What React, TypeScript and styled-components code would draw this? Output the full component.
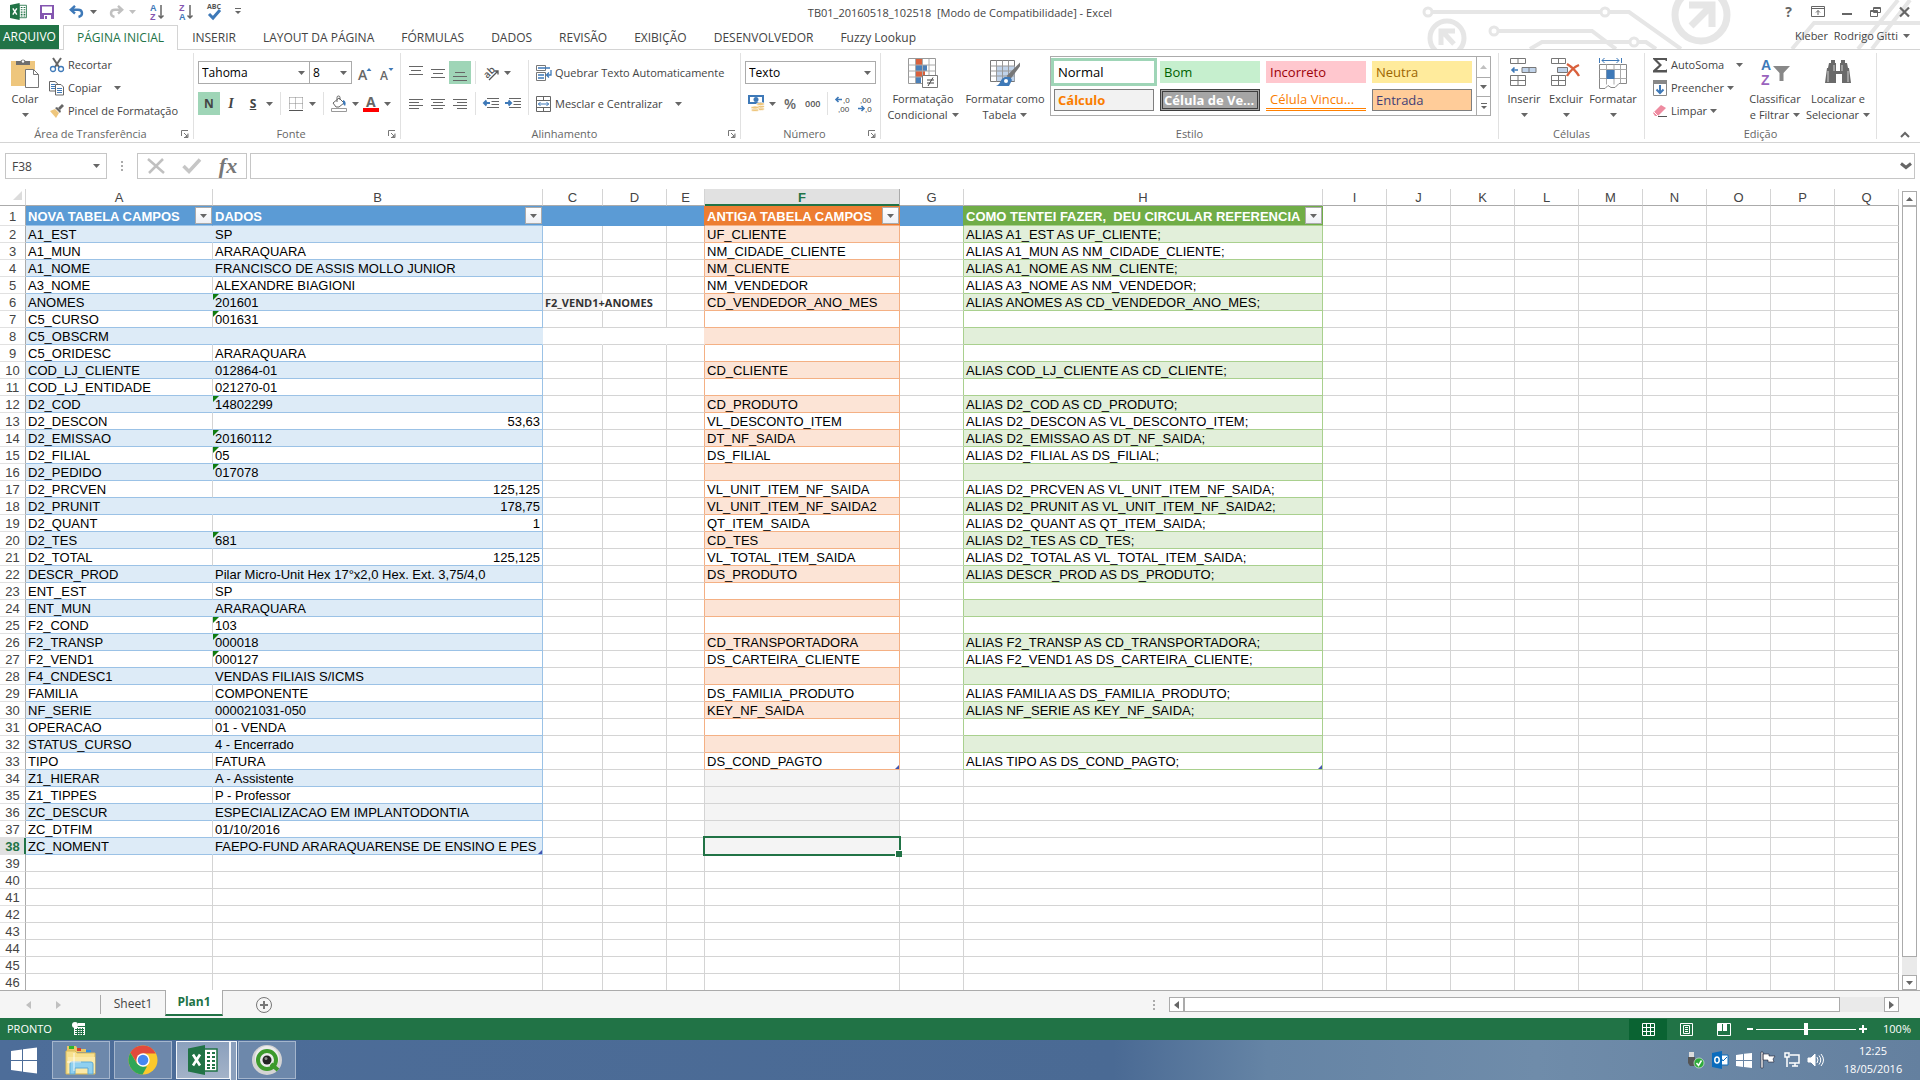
import React from 'react';
import styled, { createGlobalStyle, css } from 'styled-components';

const UI = `"Open Sans", "Noto Sans", sans-serif`;
const CELL = `"Liberation Sans", Arial, sans-serif`;
const GREEN = '#217346';
const LINE = '#d4d4d4';
const FRAME = '#ababab';

const Global = createGlobalStyle`
  * { box-sizing: border-box; }
  body { margin: 0; background: #fff; overflow: hidden; }
  button, input, select { font: inherit; color: inherit; margin: 0; }
  button { background: none; border: 0; padding: 0; }
  svg { display: block; flex: none; overflow: visible; }
`;

const Page = styled.div`
  display: flex;
  flex-direction: column;
  height: 100vh;
  font: 11px/16px ${UI};
  color: #444;
`;

/* ---------- title bar ---------- */
const Top = styled.header`
  position: relative;
  height: 50px;
  border-bottom: 1px solid ${LINE};
`;
const Circuit = styled.svg`
  position: absolute;
  top: 0;
  right: 0;
  overflow: hidden;
`;
const TitleBar = styled.div`
  position: relative;
  display: grid;
  grid-template-columns: 1fr auto 1fr;
  align-items: center;
  height: 25px;
`;
const Title = styled.h1`
  margin: 0;
  font: 11px/16px ${UI};
  white-space: pre;
`;
const QuickBar = styled.div`
  display: flex;
  align-items: center;
  padding: 0 0 2px 10px;
`;
const QuickButton = styled.button<{ $w: number }>`
  width: ${p => p.$w}px;
  height: 20px;
  display: flex;
  align-items: center;
`;
const WindowButtons = styled.div`
  display: flex;
  justify-content: flex-end;
  padding: 0 1px 2px 0;
`;
const WindowButton = styled.button`
  width: 29px;
  height: 20px;
  display: grid;
  place-items: center;
  font-weight: 700;
  font-size: 14px;
  color: #666;
`;
const TabRow = styled.div`
  position: relative;
  display: flex;
  height: 25px;
`;
const FileTab = styled.button`
  width: 59px;
  height: 24px;
  margin-right: 4px;
  background: ${GREEN};
  color: #fff;
  font-size: 12px;
`;
const Tab = styled.button<{ $active?: boolean }>`
  height: 25px;
  padding: 0 12px;
  margin-right: 1px;
  border: 1px solid transparent;
  border-bottom: 0;
  font-size: 12px;
  white-space: nowrap;
  ${p => p.$active && css`
    padding: 0 13px;
    color: ${GREEN};
    background: #fff;
    border-color: ${LINE};
  `}
`;
const Account = styled.button`
  display: flex;
  align-items: center;
  gap: 5px;
  margin: 0 10px 4px auto;
  white-space: pre;
`;

/* ---------- ribbon ---------- */
const Ribbon = styled.div`
  display: flex;
  height: 93px;
  border-bottom: 1px solid ${LINE};
`;
const GroupBox = styled.section<{ $w: number }>`
  display: flex;
  flex-direction: column;
  width: ${p => p.$w}px;
  flex: none;
  border-right: 1px solid transparent;
  border-image: linear-gradient(#fff 4px, #e1e1e1 4px, #e1e1e1 88px, #fff 88px) 1;
  border-width: 0 1px 0 0;
`;
const GroupBody = styled.div<{ $left?: number }>`
  display: flex;
  flex: 1;
  padding-left: ${p => p.$left ?? 4}px;
`;
const GroupFoot = styled.div`
  display: flex;
  align-items: center;
  height: 16px;
  color: #666;
`;
const GroupName = styled.span`
  flex: 1;
  text-align: center;
`;
const Launcher = styled.button`
  width: 12px;
  height: 12px;
`;
const Big = styled.button<{ $w: number }>`
  display: flex;
  flex-direction: column;
  align-items: center;
  width: ${p => p.$w}px;
  height: 73px;
  padding-top: 8px;
  white-space: nowrap;
`;
const BigIcon = styled.span`
  height: 33px;
`;
const BigLine = styled.span`
  display: flex;
  align-items: center;
  justify-content: center;
  gap: 4px;
  height: 16px;
`;
const SmallColumn = styled.div<{ $w?: number }>`
  display: flex;
  flex-direction: column;
  align-items: flex-start;
  padding: 3px 0 0 3px;
  ${p => p.$w && css`width: ${p.$w}px;`}
`;
const Small = styled.button`
  display: flex;
  align-items: center;
  gap: 3px;
  height: 23px;
  white-space: nowrap;
`;
const CaretPad = styled.span`
  padding-left: 9px;
`;
const Rows = styled.div<{ $left?: number }>`
  display: flex;
  flex-direction: column;
  gap: 8px;
  padding: 11px 0 0 ${p => p.$left ?? 0}px;
`;
const Row = styled.div`
  display: flex;
  align-items: center;
  height: 23px;
`;
const Tool = styled.button<{ $on?: boolean; $narrow?: boolean }>`
  width: ${p => (p.$narrow ? 10 : 22)}px;
  height: 23px;
  display: grid;
  place-items: center;
  ${p => p.$on && css`background: #9fd5b7;`}
`;
const Letter = styled.span<{ $kind: 'b' | 'i' | 'u' }>`
  font-size: 12px;
  font-weight: 700;
  ${p => p.$kind === 'i' && css`font-family: "Liberation Serif", serif; font-style: italic; font-size: 14px;`}
  ${p => p.$kind === 'u' && css`text-decoration: underline;`}
`;
const Percent = styled.span`
  font-size: 14px;
  font-weight: 600;
  color: #666;
`;
const Rule = styled.span`
  width: 1px;
  height: 23px;
  margin: 0 4px;
  background: #e1e1e1;
`;
const TallRule = styled.span`
  width: 1px;
  height: 55px;
  margin: 10px 0 0 4px;
  background: #e1e1e1;
`;
const Gap = styled.span`
  width: 2px;
`;
const Combo = styled.span<{ $w: number }>`
  position: relative;
  width: ${p => p.$w}px;
  height: 23px;
  border: 1px solid ${FRAME};
  color: #000;
  font-size: 12px;
  & + & { border-left: 0; }
  select {
    appearance: none;
    width: 100%;
    height: 21px;
    padding: 0 3px;
    border: 0;
    background: transparent;
  }
  svg { position: absolute; right: 4px; top: 9px; }
`;
const Gallery = styled.div`
  display: flex;
  width: 441px;
  height: 60px;
  margin: 6px 0 0 3px;
  border: 1px solid ${FRAME};
`;
const Styles = styled.div`
  display: grid;
  grid-template-columns: repeat(4, 100px);
  grid-auto-rows: 22px;
  gap: 6px;
  padding: 4px 4px 0 3px;
`;
const StyleButton = styled.button<{ $bg: string; $fg: string; $line?: string; $bold?: boolean; $variant?: string }>`
  padding: 0 4px;
  font-size: 13px;
  text-align: left;
  background: ${p => p.$bg};
  color: ${p => p.$fg};
  font-weight: ${p => (p.$bold ? 700 : 400)};
  white-space: nowrap;
  ${p => p.$line && css`border: 1px solid ${p.$line}; padding: 0 3px;`}
  ${p => p.$variant === 'picked' && css`outline: 3px solid #9fd5b7;`}
  ${p => p.$variant === 'double' && css`border: 3px double #3f3f3f; padding: 0 1px;`}
  ${p => p.$variant === 'under' && css`border-bottom: 3px double #ff8001;`}
`;
const GalleryArrows = styled.div`
  display: grid;
  grid-template-rows: 20px 19px 19px;
  width: 14px;
  border-left: 1px solid ${FRAME};
  button { display: grid; place-items: center; }
  button + button { border-top: 1px solid ${FRAME}; }
`;
const Collapse = styled.button`
  margin: auto 10px 4px auto;
`;

/* ---------- formula bar ---------- */
const FormulaBar = styled.div`
  display: flex;
  align-items: center;
  height: 46px;
  padding: 0 5px;
  font-size: 12px;
`;
const NameBox = styled.span`
  position: relative;
  width: 102px;
  height: 26px;
  border: 1px solid #c6c6c6;
  input { width: 100%; height: 24px; border: 0; padding: 0 6px; background: transparent; }
  svg { position: absolute; right: 6px; top: 10px; }
`;
const Dots = styled.span`
  display: grid;
  gap: 2px;
  width: 30px;
  justify-items: center;
  i { width: 2px; height: 2px; background: ${FRAME}; }
`;
const EditButtons = styled.span`
  display: grid;
  grid-template-columns: repeat(3, 1fr);
  width: 110px;
  height: 26px;
  margin-right: 3px;
  border: 1px solid #c6c6c6;
  button { display: grid; place-items: center; }
`;
const Fx = styled.span`
  font: italic 700 22px/22px "Liberation Serif", serif;
  color: #777;
`;
const FormulaBox = styled.span`
  display: flex;
  flex: 1;
  align-items: center;
  height: 26px;
  border: 1px solid #c6c6c6;
  padding-right: 2px;
  input { flex: 1; height: 24px; border: 0; padding: 0 6px; }
`;

/* ---------- sheet ---------- */
const SheetArea = styled.main`
  display: flex;
  flex: 1;
  min-height: 0;
  overflow: hidden;
`;
const GridHolder = styled.div`
  flex: 1;
  min-width: 0;
  overflow: hidden;
`;
const Table = styled.table`
  width: 100%;
  table-layout: fixed;
  border-collapse: separate;
  border-spacing: 0;
  font: 13px/14px ${CELL};
  color: #000;
`;
const Col = styled.col<{ $w: number }>`
  width: ${p => p.$w}px;
`;
const Corner = styled.td`
  height: 17px;
  padding: 0 3px 3px 0;
  border-right: 1px solid ${LINE};
  border-bottom: 1px solid ${FRAME};
  svg { margin-left: auto; }
`;
const ColHead = styled.th<{ $on?: boolean }>`
  height: 17px;
  padding: 2px 0 0;
  font-weight: 400;
  color: #444;
  border-right: 1px solid ${LINE};
  border-bottom: 1px solid ${FRAME};
  ${p => p.$on && css`
    background: #e1e1e1;
    color: ${GREEN};
    font-weight: 700;
    border-color: ${FRAME};
    border-bottom-color: ${GREEN};
    box-shadow: inset 0 -1px ${GREEN};
  `}
`;
const RowHead = styled.th<{ $on?: boolean }>`
  padding: 2px 0 0;
  font-weight: 400;
  color: #444;
  border-right: 1px solid ${FRAME};
  border-bottom: 1px solid #e1e1e1;
  ${p => p.$on && css`
    background: #e1e1e1;
    color: ${GREEN};
    font-weight: 700;
    border-right-color: ${GREEN};
    box-shadow: inset -1px 0 ${GREEN};
  `}
`;
const Cell = styled.td<{ $bg?: string; $right: string; $bottom: string; $num?: boolean; $flag?: boolean; $corner?: boolean; $spill?: boolean }>`
  position: relative;
  height: 17px;
  padding: 2px 2px 0;
  white-space: pre;
  overflow: ${p => (p.$spill ? 'visible' : 'hidden')};
  background: ${p => p.$bg ?? 'transparent'};
  border-right: 1px solid ${p => p.$right};
  border-bottom: 1px solid ${p => p.$bottom};
  text-align: ${p => (p.$num ? 'right' : 'left')};
  ${p => p.$flag && css`
    &::before {
      content: '';
      position: absolute;
      left: 0;
      top: 0;
      border: 3px solid transparent;
      border-top-color: #107c10;
      border-left-color: #107c10;
    }
  `}
  ${p => p.$corner && css`
    &::after {
      content: '';
      position: absolute;
      right: 0;
      bottom: 0;
      border: 2px solid #4455b0;
      border-top-color: transparent;
      border-left-color: transparent;
    }
  `}
`;
const HeadCell = styled.td<{ $bg: string; $right: string; $bottom: string }>`
  height: 20px;
  padding: 0 0 0 2px;
  background: ${p => p.$bg};
  border-right: 1px solid ${p => p.$right};
  border-bottom: 1px solid ${p => p.$bottom};
  color: #fff;
  font-weight: 700;
  white-space: pre;
`;
const HeadFlex = styled.div`
  display: flex;
  align-items: center;
  justify-content: space-between;
  height: 19px;
`;
const HeadText = styled.span`
  padding-top: 2px;
`;
const Filter = styled.button`
  width: 17px;
  height: 17px;
  display: grid;
  place-items: center;
  border: 1px solid ${FRAME};
  background: linear-gradient(#fff, #eef0f5);
`;
const Note = styled.span`
  position: relative;
  z-index: 1;
  font: 700 11px/14px ${UI};
  color: #333;
`;
const Selection = styled.div`
  position: absolute;
  z-index: 1;
  inset: -2px;
  border: 2px solid ${GREEN};
  &::after {
    content: '';
    position: absolute;
    right: -3px;
    bottom: -3px;
    width: 6px;
    height: 6px;
    background: ${GREEN};
    border: solid #fff;
    border-width: 1px 0 0 1px;
  }
`;
const VScroll = styled.div`
  display: flex;
  flex-direction: column;
  width: 15px;
  margin: 2px 3px 0;
  background: #eaeaea;
`;
const ScrollButton = styled.button`
  flex: none;
  width: 15px;
  height: 15px;
  display: grid;
  place-items: center;
  background: #fff;
  border: 1px solid ${FRAME};
`;
const VThumb = styled.div`
  flex: 1;
  margin-bottom: 18px;
  background: #fff;
  border: 1px solid ${FRAME};
`;

/* ---------- sheet tabs ---------- */
const TabStrip = styled.div`
  display: flex;
  align-items: center;
  height: 28px;
  padding-right: 21px;
  background: #f5f5f5;
  border-top: 1px solid ${FRAME};
`;
const Nav = styled.div`
  display: flex;
  align-items: center;
  gap: 25px;
  width: 101px;
  height: 19px;
  padding-left: 26px;
  border-right: 1px solid ${FRAME};
`;
const SheetTab = styled.button<{ $active?: boolean }>`
  align-self: flex-start;
  width: ${p => (p.$active ? 58 : 64)}px;
  height: 25px;
  font-size: 12px;
  ${p => p.$active && css`
    height: 26px;
    margin-top: -1px;
    color: ${GREEN};
    font-weight: 700;
    background: #fff;
    border: solid ${FRAME};
    border-width: 0 1px 2px;
    border-bottom-color: ${GREEN};
  `}
`;
const AddSheet = styled.button`
  margin-left: 33px;
`;
const HScroll = styled.div`
  display: flex;
  width: 730px;
  height: 15px;
  background: #eaeaea;
`;
const HThumb = styled.div`
  flex: 1;
  margin-right: 44px;
  background: #fff;
  border: 1px solid ${FRAME};
`;
const Push = styled.span`
  margin-left: auto;
`;

/* ---------- status bar ---------- */
const Status = styled.footer`
  display: flex;
  align-items: center;
  height: 22px;
  padding: 0 9px 0 7px;
  background: ${GREEN};
  color: #fff;
`;
const Macro = styled.button`
  margin-left: 20px;
`;
const View = styled.button<{ $on?: boolean }>`
  width: 38px;
  height: 21px;
  display: grid;
  place-items: center;
  ${p => p.$on && css`background: #0a6332;`}
`;
const ZoomSign = styled.button`
  width: 13px;
  height: 20px;
  display: grid;
  place-items: center;
`;
const Slider = styled.input`
  appearance: none;
  width: 100px;
  height: 12px;
  background: linear-gradient(#fff, #fff) center / 100% 1px no-repeat;
  &::-webkit-slider-thumb {
    appearance: none;
    width: 4px;
    height: 12px;
    background: #fff;
  }
`;
const ZoomValue = styled.span`
  width: 42px;
  text-align: right;
`;

/* ---------- task bar ---------- */
const TaskBar = styled.nav`
  display: flex;
  align-items: center;
  height: 40px;
  padding-right: 6px;
  background: linear-gradient(90deg, #4d6d99 0, #4a6a94 58%, #6584a5 66%, #6f8caa 80%, #64809f 100%);
  color: #fff;
`;
const Start = styled.button`
  width: 48px;
  height: 40px;
  display: grid;
  place-items: center;
`;
const Task = styled.button<{ $on?: boolean }>`
  position: relative;
  width: 58px;
  height: 38px;
  margin-left: 4px;
  display: grid;
  place-items: center;
  background: #6d88ab;
  border: 1px solid #a4b5cc;
  ${p => p.$on && css`
    width: 54px;
    margin-right: 4px;
    background: linear-gradient(#8ba0bd, #a3b2c8);
    border-color: #f2f5f9;
    &::after {
      content: '';
      position: absolute;
      left: 53px;
      top: -1px;
      width: 5px;
      height: 38px;
      background: #8ba0bd;
      border: 1px solid #f2f5f9;
    }
  `}
`;
const Tray = styled.div`
  display: flex;
  gap: 8px;
  margin-left: auto;
`;
const Clock = styled.time`
  width: 90px;
  padding-left: 8px;
  line-height: 18px;
  text-align: center;
`;

/* ---------- icons ---------- */
const Caret = ({ c = '#666', up = false }: { c?: string; up?: boolean }) => (
  <svg width="7" height="4" viewBox="0 0 7 4"><path d={up ? 'M3.500 0 7 4H0z' : 'M0 0h7L3.500 4z'} fill={c} /></svg>
);
const Side = ({ dir, c = '#666' }: { dir: 'l' | 'r'; c?: string }) => (
  <svg width="5" height="8" viewBox="0 0 5 8"><path d={dir === 'l' ? 'M5 0v8L0 4z' : 'M0 0v8l5-4z'} fill={c} /></svg>
);
const LaunchIcon = () => (
  <svg width="8" height="8" viewBox="0 0 8 8" fill="none" stroke="#777"><path d="M.5 6V.5H7M3 3l3 3M7 3.500V7.500H3" /><path d="M6.500 4v3H4z" fill="#777" stroke="none" /></svg>
);
const ExcelIcon = ({ s }: { s: number }) => (
  <svg width={s} height={s} viewBox="0 0 30 30">
    <path d="M16 4h13v22H16z" fill="#fff" stroke={GREEN} strokeWidth="1.500" />
    <path d="M19 8h3M24 8h3M19 12h3M24 12h3M19 16h3M24 16h3M19 20h3M24 20h3M19 23h3M24 23h3" stroke={GREEN} strokeWidth="2" />
    <path d="M0 3.500 17 0v30L0 26.500z" fill={GREEN} />
    <path d="m5 9.500 7 11M12 9.500l-7 11" stroke="#fff" strokeWidth="2.600" />
  </svg>
);
const SaveIcon = () => (
  <svg width="14" height="14" viewBox="0 0 14 14"><path d="M0 0h14v14H0z" fill="#8456b0" /><path d="M2 1.500h10V8H2zM4 10h7v4H4z" fill="#fff" /><path d="M5 11h2v3H5z" fill="#8456b0" /></svg>
);
const UndoIcon = ({ c, flip }: { c: string; flip?: boolean }) => (
  <svg width="15" height="13" viewBox="0 0 15 13" fill="none" stroke={c} strokeWidth="2.400">
    <g transform={flip ? 'matrix(-1 0 0 1 15 0)' : undefined}><path d="M6 .8 1.800 4.800 6 8.500M2 4.800h7c5 0 5.500 6 .5 7.200" /></g>
  </svg>
);
const SortIcon = ({ a, b, ca, cb }: { a: string; b: string; ca: string; cb: string }) => (
  <svg width="15" height="17" viewBox="0 0 15 17">
    <text x="0" y="8" fontFamily="Liberation Sans" fontWeight="700" fontSize="9" fill={ca}>{a}</text>
    <text x="0" y="17" fontFamily="Liberation Sans" fontWeight="700" fontSize="9" fill={cb}>{b}</text>
    <path d="M11 2v13M8.500 12.500 11 15l2.500-2.500" fill="none" stroke="#666" strokeWidth="1.500" />
  </svg>
);
const SpellIcon = () => (
  <svg width="15" height="17" viewBox="0 0 15 17">
    <text x="0" y="6" fontFamily="Open Sans" fontWeight="700" fontSize="7" fill="#555">ABC</text>
    <path d="m2 11 4 4 7-8" fill="none" stroke="#3e79b8" strokeWidth="3" />
  </svg>
);
const CustomIcon = () => (
  <svg width="6" height="7" viewBox="0 0 6 7"><path d="M0 .5h6" stroke="#666" /><path d="M0 3h6L3 6z" fill="#666" /></svg>
);
const PasteIcon = () => (
  <svg width="30" height="30" viewBox="0 0 30 30">
    <path d="M1 3h24v25H1z" fill="#eec67d" />
    <path d="M6 7V3h4.500a2.800 2.800 0 0 1 5 0H20v4z" fill="#6e6e6e" /><circle cx="13" cy="3.500" r="1.200" fill="#fff" />
    <path d="M15.500 11.500h8l5 5v13h-13z" fill="#fff" stroke="#777" /><path d="M23.500 11.500v5h5" fill="none" stroke="#777" />
  </svg>
);
const CutIcon = () => (
  <svg width="16" height="16" viewBox="0 0 16 16" fill="none">
    <path d="m4 1 6 9M12 1l-6 9" stroke="#666" strokeWidth="2" /><circle cx="4" cy="12" r="2.500" stroke="#3e79b8" strokeWidth="1.300" /><circle cx="12" cy="12" r="2.500" stroke="#3e79b8" strokeWidth="1.300" />
  </svg>
);
const CopyIcon = () => (
  <svg width="16" height="16" viewBox="0 0 16 16" fill="#fff" stroke="#666">
    <path d="M.5 1.500H6l2.500 2v7.500h-8z" /><path d="M2 4.500h4M2 6.500h4M2 8.500h4" stroke="#3e79b8" />
    <path d="M6.500 4.500H12l2.500 2.500v8h-8z" /><path d="M8 8.500h5M8 10.500h5M8 12.500h5" stroke="#3e79b8" />
  </svg>
);
const BrushIcon = () => (
  <svg width="16" height="16" viewBox="0 0 16 16">
    <path d="m1 8 5-2 4 4-3 5z" fill="#eec67d" /><path d="m6 5 2-1 4 4-1 2z" fill="#666" /><path d="m9 5 4-4 2 2-4 4z" fill="#666" />
  </svg>
);
const FontSizeIcon = ({ up }: { up?: boolean }) => (
  <svg width="16" height="16" viewBox="0 0 16 16">
    <text x="1" y="15" fontFamily="Open Sans" fontWeight="600" fontSize={up ? 14 : 12} fill="#666">A</text>
    <path d={up ? 'M12 3 14.500 6h-5z' : 'M9.500 3h5L12 6z'} fill="#3e79b8" />
  </svg>
);
const BordersIcon = () => (
  <svg width="14" height="14" viewBox="0 0 14 14" fill="none" stroke="#888" strokeDasharray="1 1"><path d="M.5.5h13M.5 6.500h13M.5.5v12M6.500.5v12M13.500.5v12" /><path d="M0 13.500h14" stroke="#555" strokeDasharray="none" /></svg>
);
const FillIcon = () => (
  <svg width="17" height="16" viewBox="0 0 17 16">
    <path d="m2 7 6-5 5 5-5 4H5z" fill="#fff" stroke="#666" /><path d="M6 6V1.500a1.500 1.500 0 0 1 3 0V4" fill="none" stroke="#666" /><path d="M12 4c3 1 3 4 2 6l-2-2z" fill="#3e79b8" />
    <path d="M.5 12.500h15v3H.5z" fill="#fff" stroke="#999" />
  </svg>
);
const FontColorIcon = () => (
  <svg width="16" height="16" viewBox="0 0 16 16">
    <text x="3" y="11" fontFamily="Open Sans" fontWeight="700" fontSize="14" fill="#666">A</text><path d="M0 12h16v4H0z" fill="#f00" />
  </svg>
);
const LinesIcon = ({ rows }: { rows: Array<[number, number, number]> }) => (
  <svg width="14" height="16" viewBox="0 0 14 16" stroke="#666">{rows.map(([y, a, b]) => <path key={y} d={`M${a} ${y}.5H${b}`} />)}</svg>
);
const OrientIcon = () => (
  <svg width="17" height="16" viewBox="0 0 17 16">
    <text x="1" y="12" transform="rotate(-45 5 9)" fontFamily="Open Sans" fontWeight="600" fontSize="10" fill="#555">ab</text>
    <path d="m6 15 9-9M11.500 6H15v3.500" fill="none" stroke="#555" strokeWidth="1.300" />
  </svg>
);
const IndentIcon = ({ right }: { right?: boolean }) => (
  <svg width="16" height="12" viewBox="0 0 16 12" fill="none">
    <path d="M4 .5h12M8.500 3.500H16M8.500 6.500H16M4 9.500h12" stroke="#666" />
    <path d={right ? 'M0 5h6M3.500 2.500 6 5 3.500 7.500' : 'M7 5H1M3.500 2.500 1 5l2.500 2.500'} stroke="#3e79b8" strokeWidth="2" />
  </svg>
);
const WrapIcon = () => (
  <svg width="16" height="16" viewBox="0 0 16 16" fill="none">
    <path d="M.5.5h9v5h-9z" stroke="#777" /><path d="M2 3h12" stroke="#3e79b8" strokeWidth="1.500" />
    <path d="M.5 7.500h9v8h-9z" stroke="#777" /><path d="M2 10h6M2 13h6M15 5v5h-4M13 7.500 10.500 10l2.500 2.500" stroke="#3e79b8" strokeWidth="1.300" />
  </svg>
);
const MergeIcon = () => (
  <svg width="16" height="16" viewBox="0 0 16 16" fill="none">
    <path d="M.5.5h14v15H.5zM.5 4.500h14M.5 11.500h14M7.500.5v4M7.500 11.500v4" stroke="#666" /><path d="M2 8h11M4.500 6 2.500 8l2 2M10.500 6l2 2-2 2" stroke="#3e79b8" />
  </svg>
);
const MoneyIcon = () => (
  <svg width="17" height="17" viewBox="0 0 17 17">
    <path d="M0 0h16v9H0z" fill="#3e79b8" /><path d="M2 2h12v5H2z" fill="#fff" /><circle cx="8" cy="4.500" r="2.500" fill="#3e79b8" />
    <g fill="#eec67d" stroke="#fff" strokeWidth=".7"><ellipse cx="12.500" cy="14" rx="4" ry="1.600" /><ellipse cx="12.500" cy="11.500" rx="4" ry="1.600" /><ellipse cx="12.500" cy="9" rx="4" ry="1.600" /><ellipse cx="7" cy="15" rx="4" ry="1.600" /><ellipse cx="7" cy="12.500" rx="4" ry="1.600" /></g>
  </svg>
);
const DecimalIcon = ({ more }: { more?: boolean }) => (
  <svg width="16" height="16" viewBox="0 0 16 16">
    <g fontFamily="Liberation Sans" fontSize="8" fill="#444">
      <text x={more ? 8 : 3} y="7">{more ? ',0' : ',00'}</text><text x={more ? 3 : 8} y="16">{more ? ',00' : ',0'}</text>
    </g>
    <path d={more ? 'M7 3.500H1M3.500 1 1 3.500 3.500 6' : 'M1 12.500h6M4.500 10 7 12.500 4.500 15'} fill="none" stroke="#3e79b8" strokeWidth="1.600" />
  </svg>
);
const CondIcon = () => (
  <svg width="30" height="30" viewBox="0 0 30 30" fill="none">
    <path d="M.5.5h27v25H.5z" fill="#fff" stroke="#999" />
    <path d="M8 1h6v6H8zM8 13h9v6H8z" fill="#d9603c" /><path d="M8 7h11v6H8zM8 19h5v6H8z" fill="#4a7fb8" />
    <path d="M.5 7h27M.5 13h27M.5 19h27M7.500 1v25M14.500 1v25M21 1v25" stroke="#aaa" />
    <path d="M14.500 17.500h15v12h-15z" fill="#fff" stroke="#777" /><path d="M19 22h7M19 25h7M25 19.500 20 28" stroke="#444" />
  </svg>
);
const TableIcon = () => (
  <svg width="30" height="30" viewBox="0 0 30 30" fill="none">
    <path d="M.5 2.500h24v21H.5z" fill="#fff" stroke="#777" /><path d="M6.500 8h18v15h-18z" fill="#c0d3ea" />
    <path d="M.5 8h24M.5 13h24M.5 18h24M6.500 2.500v21M12.500 2.500v21M18.500 2.500v21" stroke="#999" />
    <path d="m29 8-9 12-2-2L29 7z" fill="#777" stroke="#777" strokeWidth="2" /><path d="m20 19 2 3-3 6H6c5-1 4-8 9-9z" fill="#3e79b8" /><circle cx="16" cy="23" r="2" fill="#fff" />
  </svg>
);
const InsertIcon = () => (
  <svg width="28" height="30" viewBox="0 0 28 30" fill="#fff" stroke="#777">
    <path d="M.5.500h15v5H.5zM8 .5v5M.5 17.500h15v10H.5zM8 17.500v10M.5 22.500h15" /><path d="M12 9.500h14v5H12z" fill="#c0d3ea" /><path d="M19 9.500v5" />
    <path d="M8 12H2M4.500 9.500 2 12l2.500 2.500" fill="none" stroke="#3e79b8" strokeWidth="1.600" />
  </svg>
);
const DeleteIcon = () => (
  <svg width="30" height="30" viewBox="0 0 30 30" fill="#fff" stroke="#777">
    <path d="M.5.500h14v5H.5zM7.500.5v5M.5 17.500h14v10H.5zM7.500 17.500v10M.5 22.500h14" /><path d="M6.500 9.500h10v5h-10z" fill="#c0d3ea" />
    <path d="M16 6c5 3 9 7 12 12M28 7c-5 2-9 6-12 11" fill="none" stroke="#d9603c" strokeWidth="2.400" />
  </svg>
);
const FormatIcon = () => (
  <svg width="28" height="31" viewBox="0 0 28 31" fill="#fff" stroke="#888">
    <path d="M.5 6.500h27v19H20l-4 4h-4l-3-2-3 3H.5z" /><path d="M.5 11.500h27M.5 20.500h27M7.500 6.500v20M15 6.500v20M21.500 6.500v19" stroke="#aaa" /><path d="M7.500 12h8v9h-8z" fill="#3e79b8" stroke="none" />
    <path d="M.5 0v5M22.500 0v5M3 2.500h17M5.500 0 3 2.500 5.500 5M17.500 0 20 2.500 17.500 5" fill="none" stroke="#3e79b8" />
  </svg>
);
const SumIcon = () => (
  <svg width="16" height="16" viewBox="0 0 16 16"><path d="M15 1v3h-1L13 3H5l5 5-5 5h9l1-1v3.500H1v-2L7 8 1 2V1z" fill="#555" /></svg>
);
const FillDownIcon = () => (
  <svg width="16" height="16" viewBox="0 0 16 16"><path d="M1.500.500h13v15h-13z" fill="#fff" stroke="#888" /><path d="M1 0h14v4H1z" fill="#888" /><path d="M8 5v8M4.500 9.500 8 13l3.500-3.500" fill="none" stroke="#3e79b8" strokeWidth="2" /></svg>
);
const EraserIcon = () => (
  <svg width="16" height="16" viewBox="0 0 16 16"><path d="m1 10 8-8 5 3-8 8H3z" fill="#ee8ba0" /><path d="m2 9 4 4" stroke="#fff" /><path d="M6 13.500h9" stroke="#555" /></svg>
);
const SortFilterIcon = () => (
  <svg width="31" height="30" viewBox="0 0 31 30">
    <text x="1" y="12" fontFamily="Liberation Sans" fontWeight="700" fontSize="14" fill="#3e79b8">A</text><text x="1" y="27" fontFamily="Liberation Sans" fontWeight="700" fontSize="14" fill="#9a63bd">Z</text>
    <path d="M13 8h17l-6.500 7v8h-4v-8z" fill="#888" />
  </svg>
);
const FindIcon = () => (
  <svg width="26" height="28" viewBox="0 0 26 28" fill="#6a6a6a">
    <path d="M6 2h4v3h1v8h4V5h1V2h4v3h2l1 5h1l2 15h-9v-9h-6v9H0l2-15h1l1-5h2z" /><path d="M3 13v11M23 13v11M9 7v6M17 7v6" stroke="#fff" strokeWidth=".7" />
  </svg>
);
const StartIcon = () => (
  <svg width="28" height="27" viewBox="0 0 28 27" fill="#fff"><path d="m1 4 11-1.500V13H1zM13 2.300 27 .5V13H13zM1 14h11v10.500L1 23zM13 14h14v12.500l-14-1.800z" /></svg>
);
const FolderIcon = () => (
  <svg width="32" height="30" viewBox="0 0 32 30">
    <path d="M2 5V1h9l2 3h8v3H2z" fill="#e9c766" /><path d="M4 1h5v3H4z" fill="#2db52d" /><path d="M12 3h4v3h-4z" fill="#d8402b" /><path d="M21 5h5v3h-5z" fill="#2f8de0" />
    <path d="M1 6h9l2 2h18v21H1z" fill="#f7e08e" stroke="#d9b95a" /><path d="M3 12h27v16H3z" fill="#fbe9a8" />
    <path d="M5 29V19q0-2 2-2h19q2 0 2 2v10h-5v-6H10v6z" fill="#8fd0f0" stroke="#5fa9d6" /><path d="M9 8v18M2 17h14" stroke="#fff" strokeOpacity=".8" />
  </svg>
);
const ChromeIcon = () => (
  <svg width="30" height="30" viewBox="0 0 30 30">
    <circle cx="15" cy="15" r="14.500" fill="#fbc92c" /><path d="M15 .5A14.500 14.500 0 0 1 27.800 8.500H15L9 18 2.400 7.700A14.500 14.500 0 0 1 15 .5z" fill="#e14a3c" />
    <path d="M2.400 7.700 9.300 19 15 21.500h4L14.500 29.500A14.500 14.500 0 0 1 2.400 7.700z" fill="#2fa657" /><circle cx="15" cy="15" r="6.700" fill="#fff" /><circle cx="15" cy="15" r="5.300" fill="#4688f1" />
  </svg>
);
const QlikIcon = () => (
  <svg width="32" height="32" viewBox="0 0 32 32">
    <circle cx="16" cy="16" r="15" fill="#d4d4d4" /><circle cx="16" cy="14" r="12" fill="#ececec" /><circle cx="16" cy="16" r="9" fill="none" stroke="#3c9a2c" strokeWidth="4" /><path d="m20 20 7 6" stroke="#3c9a2c" strokeWidth="4" /><circle cx="16" cy="16" r="4.500" fill="#222" /><circle cx="15" cy="14.500" r="1.500" fill="#888" />
  </svg>
);
const TrayIcons = () => (
  <>
    <svg width="16" height="18" viewBox="0 0 16 18"><path d="M1 1h5v5H1z" fill="#ddd" /><path d="M0 6h7v9H2L0 12z" fill="#555" /><circle cx="11" cy="12" r="5" fill="#2eaa3a" stroke="#e8f5e8" strokeWidth=".6" /><path d="m8.500 12 2 2.500 3-5" fill="none" stroke="#fff" strokeWidth="1.500" /></svg>
    <svg width="16" height="18" viewBox="0 0 16 18"><path d="M8 4h8v10H8z" fill="#fff" stroke="#0b6cbd" /><path d="m9 7 2 3 4-4" fill="none" stroke="#0b6cbd" /><path d="m0 2 10-2v18L0 16z" fill="#0b6cbd" /><ellipse cx="5" cy="9" rx="2.200" ry="3" fill="none" stroke="#fff" strokeWidth="1.500" /></svg>
    <svg width="16" height="18" viewBox="0 0 16 18" fill="#fff"><path d="m0 4 7-1v6H0zM8 2.800 16 2v7H8zM0 10h7v6l-7-1zM8 10h8v7l-8-1z" /></svg>
    <svg width="16" height="18" viewBox="0 0 16 18" fill="#fff" stroke="#223" strokeWidth=".6"><path d="M1 1h2v16H1zM3 3h6v2h6l-2 3 1 3H8V9H3z" /></svg>
    <svg width="16" height="18" viewBox="0 0 16 18" fill="none" stroke="#fff" strokeWidth="1.500"><path d="M6 4h9v8H5M8 15h6M11 12v3M1 2h4v4H1zM3 6v10" /></svg>
    <svg width="16" height="18" viewBox="0 0 16 18" fill="none" stroke="#fff"><path d="M0 7h3l4-4v12l-4-4H0z" fill="#fff" /><path d="M9 6q2 3 0 6M11 4.500q3.500 4.500 0 9M13 3q5 6 0 12" /></svg>
  </>
);

/* ---------- data ---------- */
const right = true;
type Line = { a?: string; b?: string; num?: boolean; flag?: boolean; f?: string; h?: string };
const lines: Line[] = [
  { a: 'A1_EST', b: 'SP', f: 'UF_CLIENTE', h: 'ALIAS A1_EST AS UF_CLIENTE;' },
  { a: 'A1_MUN', b: 'ARARAQUARA', f: 'NM_CIDADE_CLIENTE', h: 'ALIAS A1_MUN AS NM_CIDADE_CLIENTE;' },
  { a: 'A1_NOME', b: 'FRANCISCO DE ASSIS MOLLO JUNIOR', f: 'NM_CLIENTE', h: 'ALIAS A1_NOME AS NM_CLIENTE;' },
  { a: 'A3_NOME', b: 'ALEXANDRE BIAGIONI', f: 'NM_VENDEDOR', h: 'ALIAS A3_NOME AS NM_VENDEDOR;' },
  { a: 'ANOMES', b: '201601', flag: true, f: 'CD_VENDEDOR_ANO_MES', h: 'ALIAS ANOMES AS CD_VENDEDOR_ANO_MES;' },
  { a: 'C5_CURSO', b: '001631', flag: true },
  { a: 'C5_OBSCRM' },
  { a: 'C5_ORIDESC', b: 'ARARAQUARA' },
  { a: 'COD_LJ_CLIENTE', b: '012864-01', f: 'CD_CLIENTE', h: 'ALIAS COD_LJ_CLIENTE AS CD_CLIENTE;' },
  { a: 'COD_LJ_ENTIDADE', b: '021270-01' },
  { a: 'D2_COD', b: '14802299', flag: true, f: 'CD_PRODUTO', h: 'ALIAS D2_COD AS CD_PRODUTO;' },
  { a: 'D2_DESCON', b: '53,63', num: right, f: 'VL_DESCONTO_ITEM', h: 'ALIAS D2_DESCON AS VL_DESCONTO_ITEM;' },
  { a: 'D2_EMISSAO', b: '20160112', flag: true, f: 'DT_NF_SAIDA', h: 'ALIAS D2_EMISSAO AS DT_NF_SAIDA;' },
  { a: 'D2_FILIAL', b: '05', flag: true, f: 'DS_FILIAL', h: 'ALIAS D2_FILIAL AS DS_FILIAL;' },
  { a: 'D2_PEDIDO', b: '017078', flag: true },
  { a: 'D2_PRCVEN', b: '125,125', num: right, f: 'VL_UNIT_ITEM_NF_SAIDA', h: 'ALIAS D2_PRCVEN AS VL_UNIT_ITEM_NF_SAIDA;' },
  { a: 'D2_PRUNIT', b: '178,75', num: right, f: 'VL_UNIT_ITEM_NF_SAIDA2', h: 'ALIAS D2_PRUNIT AS VL_UNIT_ITEM_NF_SAIDA2;' },
  { a: 'D2_QUANT', b: '1', num: right, f: 'QT_ITEM_SAIDA', h: 'ALIAS D2_QUANT AS QT_ITEM_SAIDA;' },
  { a: 'D2_TES', b: '681', flag: true, f: 'CD_TES', h: 'ALIAS D2_TES AS CD_TES;' },
  { a: 'D2_TOTAL', b: '125,125', num: right, f: 'VL_TOTAL_ITEM_SAIDA', h: 'ALIAS D2_TOTAL AS VL_TOTAL_ITEM_SAIDA;' },
  { a: 'DESCR_PROD', b: 'Pilar Micro-Unit Hex 17°x2,0 Hex. Ext. 3,75/4,0', f: 'DS_PRODUTO', h: 'ALIAS DESCR_PROD AS DS_PRODUTO;' },
  { a: 'ENT_EST', b: 'SP' },
  { a: 'ENT_MUN', b: 'ARARAQUARA' },
  { a: 'F2_COND', b: '103', flag: true },
  { a: 'F2_TRANSP', b: '000018', flag: true, f: 'CD_TRANSPORTADORA', h: 'ALIAS F2_TRANSP AS CD_TRANSPORTADORA;' },
  { a: 'F2_VEND1', b: '000127', flag: true, f: 'DS_CARTEIRA_CLIENTE', h: 'ALIAS F2_VEND1 AS DS_CARTEIRA_CLIENTE;' },
  { a: 'F4_CNDESC1', b: 'VENDAS FILIAIS S/ICMS' },
  { a: 'FAMILIA', b: 'COMPONENTE', f: 'DS_FAMILIA_PRODUTO', h: 'ALIAS FAMILIA AS DS_FAMILIA_PRODUTO;' },
  { a: 'NF_SERIE', b: '000021031-050', f: 'KEY_NF_SAIDA', h: 'ALIAS NF_SERIE AS KEY_NF_SAIDA;' },
  { a: 'OPERACAO', b: '01 - VENDA' },
  { a: 'STATUS_CURSO', b: '4 - Encerrado' },
  { a: 'TIPO', b: 'FATURA', f: 'DS_COND_PAGTO', h: 'ALIAS TIPO AS DS_COND_PAGTO;' },
  { a: 'Z1_HIERAR', b: 'A - Assistente' },
  { a: 'Z1_TIPPES', b: 'P - Professor' },
  { a: 'ZC_DESCUR', b: 'ESPECIALIZACAO EM IMPLANTODONTIA' },
  { a: 'ZC_DTFIM', b: '01/10/2016' },
  { a: 'ZC_NOMENT', b: 'FAEPO-FUND ARARAQUARENSE DE ENSINO E PES' },
  {}, {}, {}, {}, {}, {}, {}, {},
];
const letters = 'ABCDEFGHIJKLMNOPQ'.split('');
const extra = letters.slice(8);
const B = { head: '#5b9bd5', band: '#ddebf7', line: '#9bc2e6' };
const O = { head: '#ed7d31', band: '#fce4d6', line: '#f4b084' };
const G = { head: '#70ad47', band: '#e2efda', line: '#a9d08e' };

const FilterHead = ({ bg, line, text }: { bg: string; line: string; text: string }) => (
  <HeadCell $bg={bg} $right={bg} $bottom={line}>
    <HeadFlex><HeadText>{text}</HeadText><Filter aria-label={`Filtrar ${text}`}><Caret /></Filter></HeadFlex>
  </HeadCell>
);

const Line = ({ n, d }: { n: number; d: Line }) => {
  const band = n % 2 === 0;
  const main = n <= 38;
  const side = n <= 33;
  const wide = n === 8;
  return (
    <tr>
      <RowHead scope="row" $on={n === 38}>{n}</RowHead>
      <Cell $bg={main && band ? B.band : undefined} $right={main && band ? B.band : LINE} $bottom={main ? B.line : LINE}>{d.a}</Cell>
      <Cell $bg={main && band ? B.band : undefined} $right={wide ? B.band : main ? B.line : LINE} $bottom={main ? B.line : LINE} $num={d.num} $flag={d.flag} $corner={n === 38}>{d.b}</Cell>
      <Cell $bg={n === 6 ? '#f4f4f4' : undefined} $right={wide || n === 6 ? '#fff' : LINE} $bottom={LINE} $spill={n === 6}>{n === 6 && <Note>F2_VEND1+ANOMES</Note>}</Cell>
      <Cell $right={wide ? '#fff' : LINE} $bottom={LINE} />
      <Cell $right={wide ? O.band : side ? O.line : LINE} $bottom={LINE} />
      <Cell $bg={side ? (band ? O.band : undefined) : main ? '#f4f4f4' : undefined} $right={side ? O.line : LINE} $bottom={side ? O.line : LINE} $corner={n === 33} $spill={n === 38}>{n === 38 ? <Selection /> : d.f}</Cell>
      <Cell $right={side ? G.line : LINE} $bottom={LINE} />
      <Cell $bg={side && band ? G.band : undefined} $right={side ? G.line : LINE} $bottom={side ? G.line : LINE} $corner={n === 33}>{d.h}</Cell>
      {extra.map(l => <Cell key={l} $right={l === 'Q' ? FRAME : LINE} $bottom={LINE} />)}
    </tr>
  );
};

const Group = ({ name, w, left, launch, children }: { name: string; w: number; left?: number; launch?: boolean; children: React.ReactNode }) => (
  <GroupBox $w={w} aria-label={name}>
    <GroupBody $left={left}>{children}</GroupBody>
    <GroupFoot><GroupName>{name}</GroupName>{launch && <Launcher aria-label={`Opções de ${name}`}><LaunchIcon /></Launcher>}</GroupFoot>
  </GroupBox>
);
const BigButton = ({ w, icon, one, two }: { w: number; icon: React.ReactNode; one: string; two?: string }) => (
  <Big $w={w}><BigIcon>{icon}</BigIcon><BigLine>{one}</BigLine><BigLine>{two}<Caret /></BigLine></Big>
);
const Drop = ({ label }: { label: string }) => <Tool $narrow aria-label={label}><Caret /></Tool>;

const tabs = ['PÁGINA INICIAL', 'INSERIR', 'LAYOUT DA PÁGINA', 'FÓRMULAS', 'DADOS', 'REVISÃO', 'EXIBIÇÃO', 'DESENVOLVEDOR', 'Fuzzy Lookup'];

export default function App() {
  return (
    <Page>
      <Global />
      <Top>
        <Circuit width="520" height="49" viewBox="0 0 520 49" fill="none" stroke="#e6e6e6" strokeWidth="4">
          <path d="M32 12h168M210 12h19l52 37M98 31h94l24 18M130 49l12-7h88M238 42h8l10 7M392 49l22-26h106M458 49 498 0M472 49l38-49" />
          <g strokeWidth="3"><circle cx="28" cy="12" r="4" /><circle cx="205" cy="12" r="4" /><circle cx="94" cy="31" r="4" /><circle cx="234" cy="42" r="4" /></g>
          <circle cx="47" cy="38" r="17" strokeWidth="5" /><path d="M55 31H41v14M42 31l12 13" strokeWidth="5" />
          <circle cx="301" cy="15" r="26" strokeWidth="7" /><path d="M289 5h23v22M311 6l-20 20" strokeWidth="7" />
        </Circuit>
        <TitleBar>
          <QuickBar>
            <QuickButton $w={30} aria-label="Excel"><ExcelIcon s={17} /></QuickButton>
            <QuickButton $w={29} aria-label="Salvar"><SaveIcon /></QuickButton>
            <QuickButton $w={21} aria-label="Desfazer"><UndoIcon c="#3e79b8" /></QuickButton>
            <QuickButton $w={19} aria-label="Lista desfazer"><Caret /></QuickButton>
            <QuickButton $w={20} aria-label="Refazer"><UndoIcon c="#c0c0c0" flip /></QuickButton>
            <QuickButton $w={21} aria-label="Lista refazer"><Caret c="#c0c0c0" /></QuickButton>
            <QuickButton $w={29} aria-label="Classificar de A a Z"><SortIcon a="A" b="Z" ca="#3e79b8" cb="#8456b0" /></QuickButton>
            <QuickButton $w={28} aria-label="Classificar de Z a A"><SortIcon a="Z" b="A" ca="#8456b0" cb="#3e79b8" /></QuickButton>
            <QuickButton $w={28} aria-label="Ortografia"><SpellIcon /></QuickButton>
            <QuickButton $w={10} aria-label="Personalizar"><CustomIcon /></QuickButton>
          </QuickBar>
          <Title>{'TB01_20160518_102518  [Modo de Compatibilidade] - Excel'}</Title>
          <WindowButtons>
            <WindowButton>?</WindowButton>
            <WindowButton aria-label="Faixa de opções"><svg width="14" height="11" viewBox="0 0 14 11" fill="none" stroke="#666"><path d="M.5.500h13v10H.5zM.5 2.500h13M7 9V4.500M5 6.500l2-2 2 2" /></svg></WindowButton>
            <WindowButton aria-label="Minimizar"><svg width="10" height="10" viewBox="0 0 10 10"><path d="M0 6h10v2H0z" fill="#666" /></svg></WindowButton>
            <WindowButton aria-label="Restaurar"><svg width="12" height="10" viewBox="0 0 12 10" fill="#fff" stroke="#666"><path d="M3.500.5h7v5h-7zM3 1.500h8M.5 3.500h7v6h-7zM0 4.500h8" /></svg></WindowButton>
            <WindowButton aria-label="Fechar"><svg width="11" height="10" viewBox="0 0 11 10" stroke="#666" strokeWidth="2.200"><path d="m1 .5 9 9M10 .5l-9 9" /></svg></WindowButton>
          </WindowButtons>
        </TitleBar>
        <TabRow>
          <FileTab>ARQUIVO</FileTab>
          {tabs.map((t, i) => <Tab key={t} $active={i === 0}>{t}</Tab>)}
          <Account>{'Kleber  Rodrigo Gitti'}<Caret /></Account>
        </TabRow>
      </Top>

      <Ribbon>
        <Group name="Área de Transferência" w={194} launch>
          <BigButton w={42} icon={<PasteIcon />} one="Colar" />
          <SmallColumn>
            <Small><CutIcon />Recortar</Small>
            <Small><CopyIcon />Copiar<CaretPad><Caret /></CaretPad></Small>
            <Small><BrushIcon />Pincel de Formatação</Small>
          </SmallColumn>
        </Group>
        <Group name="Fonte" w={207} launch>
          <Rows>
            <Row>
              <Combo $w={112}><select aria-label="Fonte"><option>Tahoma</option></select><Caret /></Combo>
              <Combo $w={42}><select aria-label="Tamanho da fonte"><option>8</option></select><Caret /></Combo>
              <Gap />
              <Tool aria-label="Aumentar fonte"><FontSizeIcon up /></Tool>
              <Tool aria-label="Diminuir fonte"><FontSizeIcon /></Tool>
            </Row>
            <Row>
              <Tool $on><Letter $kind="b">N</Letter></Tool>
              <Tool><Letter $kind="i">I</Letter></Tool>
              <Tool><Letter $kind="u">S</Letter></Tool>
              <Drop label="Sublinhado" />
              <Gap />
              <Rule />
              <Tool aria-label="Bordas"><BordersIcon /></Tool>
              <Drop label="Tipos de borda" />
              <Gap />
              <Rule />
              <Tool aria-label="Cor de preenchimento"><FillIcon /></Tool>
              <Drop label="Cores de preenchimento" />
              <Tool aria-label="Cor da fonte"><FontColorIcon /></Tool>
              <Drop label="Cores da fonte" />
            </Row>
          </Rows>
        </Group>
        <Group name="Alinhamento" w={340} launch>
          <Rows>
            <Row>
              <Tool aria-label="Alinhar em cima"><LinesIcon rows={[[1, 0, 14], [5, 2, 12], [9, 0, 14]]} /></Tool>
              <Tool aria-label="Alinhar no meio"><LinesIcon rows={[[4, 0, 14], [8, 2, 12], [12, 0, 14]]} /></Tool>
              <Tool $on aria-label="Alinhar embaixo"><LinesIcon rows={[[7, 2, 12], [11, 0, 14], [15, 0, 14]]} /></Tool>
              <Rule />
              <Tool aria-label="Orientação"><OrientIcon /></Tool>
              <Drop label="Opções de orientação" />
            </Row>
            <Row>
              <Tool aria-label="Alinhar à esquerda"><LinesIcon rows={[[3, 0, 14], [6, 0, 10], [9, 0, 14], [12, 0, 10]]} /></Tool>
              <Tool aria-label="Centralizar"><LinesIcon rows={[[3, 0, 14], [6, 2, 12], [9, 0, 14], [12, 2, 12]]} /></Tool>
              <Tool aria-label="Alinhar à direita"><LinesIcon rows={[[3, 0, 14], [6, 4, 14], [9, 0, 14], [12, 4, 14]]} /></Tool>
              <Rule />
              <Tool aria-label="Diminuir recuo"><IndentIcon /></Tool>
              <Tool aria-label="Aumentar recuo"><IndentIcon right /></Tool>
            </Row>
          </Rows>
          <TallRule />
          <Rows $left={7}>
            <Small><WrapIcon />Quebrar Texto Automaticamente</Small>
            <Small><MergeIcon />Mesclar e Centralizar<CaretPad><Caret /></CaretPad></Small>
          </Rows>
        </Group>
        <Group name="Número" w={140} launch>
          <Rows>
            <Row><Combo $w={131}><select aria-label="Formato de número"><option>Texto</option></select><Caret /></Combo></Row>
            <Row>
              <Tool aria-label="Formato contábil"><MoneyIcon /></Tool>
              <Drop label="Moedas" />
              <Gap />
              <Tool><Percent>%</Percent></Tool>
              <Tool aria-label="Separador de milhares"><svg width="17" height="10" viewBox="0 0 17 10"><text x="1" y="8" fontFamily="Open Sans" fontWeight="600" fontSize="9" fill="#555">000</text></svg></Tool>
              <Rule />
              <Tool aria-label="Aumentar casas decimais"><DecimalIcon more /></Tool>
              <Tool aria-label="Diminuir casas decimais"><DecimalIcon /></Tool>
            </Row>
          </Rows>
        </Group>
        <Group name="Estilo" w={618} left={2}>
          <BigButton w={80} icon={<CondIcon />} one="Formatação" two="Condicional" />
          <BigButton w={84} icon={<TableIcon />} one="Formatar como" two="Tabela" />
          <Gallery>
            <Styles>
              <StyleButton $bg="#fff" $fg="#000" $variant="picked">Normal</StyleButton>
              <StyleButton $bg="#c6efce" $fg="#006100">Bom</StyleButton>
              <StyleButton $bg="#ffc7ce" $fg="#9c0006">Incorreto</StyleButton>
              <StyleButton $bg="#ffeb9c" $fg="#9c6500">Neutra</StyleButton>
              <StyleButton $bg="#f2f2f2" $fg="#fa7d00" $line="#7f7f7f" $bold>Cálculo</StyleButton>
              <StyleButton $bg="#a5a5a5" $fg="#fff" $bold $variant="double">Célula de Ve...</StyleButton>
              <StyleButton $bg="#fff" $fg="#fa7d00" $variant="under">Célula Vincu...</StyleButton>
              <StyleButton $bg="#ffcc99" $fg="#3f3f76" $line="#7f7f7f">Entrada</StyleButton>
            </Styles>
            <GalleryArrows>
              <button aria-label="Linha anterior"><Caret c="#c0c0c0" up /></button>
              <button aria-label="Próxima linha"><Caret /></button>
              <button aria-label="Mais estilos"><CustomIcon /></button>
            </GalleryArrows>
          </Gallery>
        </Group>
        <Group name="Células" w={146} left={5}>
          <BigButton w={40} icon={<InsertIcon />} one="Inserir" />
          <BigButton w={44} icon={<DeleteIcon />} one="Excluir" />
          <BigButton w={50} icon={<FormatIcon />} one="Formatar" />
        </Group>
        <Group name="Edição" w={232}>
          <SmallColumn $w={96}>
            <Small><SumIcon />AutoSoma<CaretPad><Caret /></CaretPad></Small>
            <Small><FillDownIcon />Preencher<Caret /></Small>
            <Small><EraserIcon />Limpar<Caret /></Small>
          </SmallColumn>
          <BigButton w={60} icon={<SortFilterIcon />} one="Classificar" two="e Filtrar" />
          <BigButton w={66} icon={<FindIcon />} one="Localizar e" two="Selecionar" />
        </Group>
        <Collapse aria-label="Recolher faixa"><svg width="10" height="7" viewBox="0 0 10 7" fill="none" stroke="#666" strokeWidth="2"><path d="m1 6 4-4 4 4" /></svg></Collapse>
      </Ribbon>

      <FormulaBar>
        <NameBox><input aria-label="Caixa de nome" defaultValue="F38" /><Caret /></NameBox>
        <Dots><i /><i /><i /></Dots>
        <EditButtons>
          <button aria-label="Cancelar"><svg width="18" height="16" viewBox="0 0 18 16" stroke="#c0c0c0" strokeWidth="2.500"><path d="m1 1 16 14M16 1 2 15" /></svg></button>
          <button aria-label="Inserir"><svg width="20" height="16" viewBox="0 0 20 16" fill="none" stroke="#c6c6c6" strokeWidth="3.500"><path d="m1.500 8 5.500 5.500L18 1.500" /></svg></button>
          <button aria-label="Inserir função"><Fx>fx</Fx></button>
        </EditButtons>
        <FormulaBox>
          <input aria-label="Barra de fórmulas" />
          <svg width="12" height="8" viewBox="0 0 12 8" fill="none" stroke="#666" strokeWidth="3"><path d="m1 1.500 5 4 5-4" /></svg>
        </FormulaBox>
      </FormulaBar>

      <SheetArea>
        <GridHolder>
          <Table>
            <colgroup>{[26, 187, 330, 60, 64, 38, 195, 64, 359].map((w, i) => <Col key={i} $w={w} />)}</colgroup>
            <thead>
              <tr>
                <Corner><svg width="9" height="9" viewBox="0 0 9 9"><path d="M9 0v9H0z" fill="#dcdcdc" /></svg></Corner>
                {letters.map(l => <ColHead key={l} scope="col" $on={l === 'F'}>{l}</ColHead>)}
              </tr>
            </thead>
            <tbody>
              <tr>
                <RowHead scope="row">1</RowHead>
                <FilterHead bg={B.head} line={B.line} text="NOVA TABELA CAMPOS" />
                <FilterHead bg={B.head} line={B.line} text="DADOS" />
                <HeadCell $bg={B.head} $right={B.head} $bottom={B.head} />
                <HeadCell $bg={B.head} $right={B.head} $bottom={B.head} />
                <HeadCell $bg={B.head} $right={O.head} $bottom={B.head} />
                <FilterHead bg={O.head} line={O.line} text="ANTIGA TABELA CAMPOS" />
                <HeadCell $bg={B.head} $right={G.head} $bottom={B.head} />
                <FilterHead bg={G.head} line={G.line} text={'COMO TENTEI FAZER,  DEU CIRCULAR REFERENCIA'} />
                {extra.map(l => <Cell key={l} $right={l === 'Q' ? FRAME : LINE} $bottom={LINE} />)}
              </tr>
              {lines.map((d, i) => <Line key={i} n={i + 2} d={d} />)}
            </tbody>
          </Table>
        </GridHolder>
        <VScroll>
          <ScrollButton aria-label="Rolar para cima"><Caret up /></ScrollButton>
          <VThumb />
          <ScrollButton aria-label="Rolar para baixo"><Caret /></ScrollButton>
        </VScroll>
      </SheetArea>

      <TabStrip>
        <Nav><Side dir="l" c="#c0c0c0" /><Side dir="r" c="#c0c0c0" /></Nav>
        <SheetTab>Sheet1</SheetTab>
        <SheetTab $active>Plan1</SheetTab>
        <AddSheet aria-label="Nova planilha"><svg width="16" height="16" viewBox="0 0 16 16" fill="none" stroke="#777"><circle cx="8" cy="8" r="7.500" /><path d="M8 4v8M4 8h8" strokeWidth="2" /></svg></AddSheet>
        <Push><Dots><i /><i /><i /></Dots></Push>
        <HScroll>
          <ScrollButton aria-label="Rolar para a esquerda"><Side dir="l" /></ScrollButton>
          <HThumb />
          <ScrollButton aria-label="Rolar para a direita"><Side dir="r" /></ScrollButton>
        </HScroll>
      </TabStrip>

      <Status>
        PRONTO
        <Macro aria-label="Gravar macro"><svg width="14" height="14" viewBox="0 0 14 14" fill="#fff"><path d="M6 1h7v3H6zM2 5h11v8H2z" /><path d="M3 7.500h9M3 9.500h9M3 11.500h9M5.500 6v7M8 6v7M10.500 6v7" stroke={GREEN} /><circle cx="3" cy="3" r="3" /></svg></Macro>
        <Push />
        <View $on aria-label="Normal"><svg width="13" height="13" viewBox="0 0 13 13" fill="none" stroke="#fff"><path d="M.5.500h12v12H.5zM.5 4.500h12M.5 8.500h12M4.500.5v12M8.500.5v12" /></svg></View>
        <View aria-label="Layout da página"><svg width="13" height="13" viewBox="0 0 13 13" fill="none" stroke="#fff"><path d="M.5.500h12v12H.5zM3.500 2.500h6v8h-6zM5 4.500h3M5 6.500h3M5 8.500h3" /></svg></View>
        <View aria-label="Quebra de página"><svg width="14" height="13" viewBox="0 0 14 13"><path d="M.5.500h13v12H.5z" fill="none" stroke="#fff" /><path d="M1 1h4v7H1zM6 1h4v7H6z" fill="#fff" /></svg></View>
        <ZoomSign aria-label="Reduzir"><svg width="6" height="2" viewBox="0 0 6 2"><path d="M0 0h6v2H0z" fill="#fff" /></svg></ZoomSign>
        <Slider type="range" min={0} max={100} defaultValue={50} aria-label="Zoom" />
        <ZoomSign aria-label="Ampliar"><svg width="8" height="8" viewBox="0 0 8 8"><path d="M4 0v8M0 4h8" stroke="#fff" strokeWidth="2" /></svg></ZoomSign>
        <ZoomValue>100%</ZoomValue>
      </Status>

      <TaskBar>
        <Start aria-label="Iniciar"><StartIcon /></Start>
        <Task aria-label="Explorador"><FolderIcon /></Task>
        <Task aria-label="Chrome"><ChromeIcon /></Task>
        <Task $on aria-label="Excel"><ExcelIcon s={30} /></Task>
        <Task aria-label="QlikView"><QlikIcon /></Task>
        <Tray><TrayIcons /></Tray>
        <Clock>12:25<br />18/05/2016</Clock>
      </TaskBar>
    </Page>
  );
}
